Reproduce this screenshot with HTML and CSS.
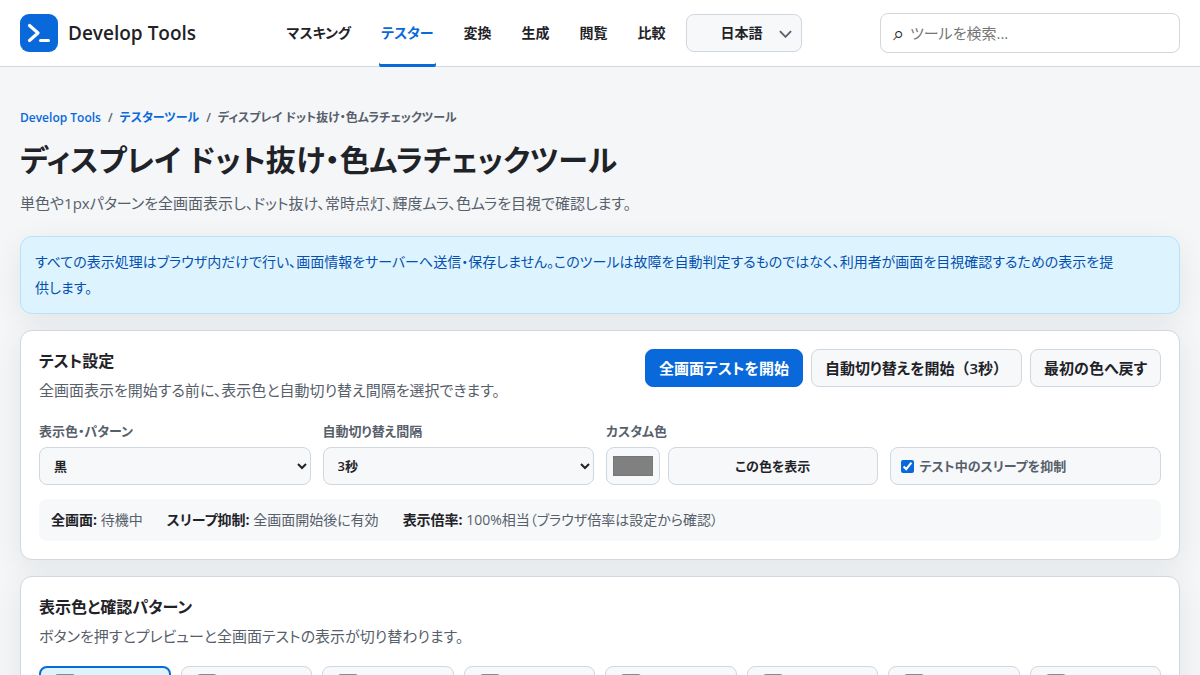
FILE: index.html
```html
<!DOCTYPE html>
<html lang="ja">
<head>
    <meta charset="UTF-8">
    <meta name="viewport" content="width=device-width, initial-scale=1">
    <title>ディスプレイ ドット抜け・色ムラチェックツール</title>
    <link rel="stylesheet" href="styles.css">
</head>
<body>
<header class="site-header">
    <a class="brand" href="#">
        <svg class="brand-logo" viewBox="0 0 38 38" aria-hidden="true">
            <rect width="38" height="38" rx="9" fill="#0969da"/>
            <path d="M9.500 11.500l8.500 7.500-8.500 7.500" fill="none" stroke="#fff" stroke-width="3.200" stroke-linecap="round" stroke-linejoin="round"/>
            <path d="M20.500 26.500h8" stroke="#fff" stroke-width="3" stroke-linecap="round"/>
        </svg>
        <span>Develop Tools</span>
    </a>
    <nav class="site-nav">
        <a href="#">マスキング</a>
        <a href="#" class="active">テスター</a>
        <a href="#">変換</a>
        <a href="#">生成</a>
        <a href="#">閲覧</a>
        <a href="#">比較</a>
        <div class="lang">
            <select class="lang-select" aria-label="言語">
                <option>日本語</option>
                <option>English</option>
            </select>
            <svg class="lang-arrow" viewBox="0 0 14 8" aria-hidden="true">
                <path d="M1 1l6 6 6-6" fill="none" stroke="#57606a" stroke-width="2"/>
            </svg>
        </div>
    </nav>
    <label class="search">
        <span class="search-icon">⌕</span>
        <input type="search" placeholder="ツールを検索..." aria-label="ツールを検索">
    </label>
</header>

<main class="page">
    <nav class="breadcrumb">
        <a href="#">Develop Tools</a>
        <span>/</span>
        <a href="#">テスターツール</a>
        <span>/</span>
        <span>ディスプレイ ドット抜け・色ムラチェックツール</span>
    </nav>
    <h1>ディスプレイ ドット抜け・色ムラチェックツール</h1>
    <p class="lead">単色や1pxパターンを全画面表示し、ドット抜け、常時点灯、輝度ムラ、色ムラを目視で確認します。</p>

    <div class="notice">すべての表示処理はブラウザ内だけで行い、画面情報をサーバーへ送信・保存しません。このツールは故障を自動判定するものではなく、利用者が画面を目視確認するための表示を提<br>供します。</div>

    <section class="card">
        <div class="card-head">
            <div>
                <h2>テスト設定</h2>
                <p>全画面表示を開始する前に、表示色と自動切り替え間隔を選択できます。</p>
            </div>
            <div class="actions">
                <button type="button" class="btn primary">全画面テストを開始</button>
                <button type="button" class="btn">自動切り替えを開始<span class="full-width">（3秒）</span></button>
                <button type="button" class="btn">最初の色へ戻す</button>
            </div>
        </div>
        <div class="settings">
            <div class="field">
                <label for="pattern">表示色・パターン</label>
                <select id="pattern" class="control">
                    <option>黒</option>
                    <option>白</option>
                    <option>赤</option>
                </select>
            </div>
            <div class="field">
                <label for="interval">自動切り替え間隔</label>
                <select id="interval" class="control">
                    <option>3秒</option>
                    <option>5秒</option>
                    <option>10秒</option>
                </select>
            </div>
            <div class="field">
                <label for="custom-color">カスタム色</label>
                <div class="color-row">
                    <input type="color" id="custom-color" class="color-input" value="#808080">
                    <button type="button" class="control">この色を表示</button>
                </div>
            </div>
            <label class="control check">
                <input type="checkbox" checked>
                <span>テスト中のスリープを抑制</span>
            </label>
        </div>
        <div class="status">
            <span><strong>全画面:</strong> 待機中</span>
            <span><strong>スリープ抑制:</strong> 全画面開始後に有効</span>
            <span><strong>表示倍率:</strong> 100%相当（ブラウザ倍率は設定から確認）</span>
        </div>
    </section>

    <section class="card">
        <h2>表示色と確認パターン</h2>
        <p>ボタンを押すとプレビューと全画面テストの表示が切り替わります。</p>
        <div class="patterns">
            <button type="button" class="pattern selected"><span class="swatch black"></span>黒</button>
            <button type="button" class="pattern"><span class="swatch white"></span>白</button>
            <button type="button" class="pattern"><span class="swatch red"></span>赤</button>
            <button type="button" class="pattern"><span class="swatch green"></span>緑</button>
            <button type="button" class="pattern"><span class="swatch blue"></span>青</button>
            <button type="button" class="pattern"><span class="swatch cyan"></span>シアン</button>
            <button type="button" class="pattern"><span class="swatch magenta"></span>マゼンタ</button>
            <button type="button" class="pattern"><span class="swatch yellow"></span>黄</button>
        </div>
    </section>
</main>
</body>
</html>
```
FILE: styles.css
```css
* {
    box-sizing: border-box;
}
body {
    margin: 0;
    background-color: #f4f6f8;
    color: #1f2328;
    font-family: "Open Sans", "Noto Sans CJK JP", sans-serif;
    font-size: 15px;
    line-height: 26px;
    font-feature-settings: "palt";
}
button, input, select {
    font: inherit;
    font-feature-settings: inherit;
    color: inherit;
}
a {
    color: #0969da;
    text-decoration: none;
}
h1, h2, p {
    margin: 0;
}
.full-width {
    font-feature-settings: normal;
}

/* header */
.site-header {
    display: grid;
    grid-template-columns: auto 1fr auto;
    align-items: center;
    height: 67px;
    padding: 0 20px;
    background-color: #fff;
    border-bottom: 1px solid #d0d7de;
}
.brand {
    display: flex;
    align-items: center;
    gap: 10px;
    color: #1f2328;
    font-size: 19px;
    font-weight: 600;
}
.brand-logo {
    width: 38px;
    height: 38px;
}
.site-nav {
    display: flex;
    align-items: center;
    justify-self: center;
    gap: 26px;
    padding-left: 10px;
}
.site-nav a {
    height: 67px;
    margin-bottom: -1px;
    padding: 0 2px;
    line-height: 66px;
    font-size: 14px;
    font-weight: 600;
    color: #1f2328;
    border-radius: 2px;
}
.site-nav a.active {
    color: #0969da;
    box-shadow: inset 0 -3px #0969da;
}
.lang {
    position: relative;
    margin-left: -8px;
}
.lang-select {
    display: block;
    appearance: none;
    width: 116px;
    height: 38px;
    padding: 0 38px 0 34px;
    font-size: 14px;
    font-weight: 600;
    background-color: #f6f8fa;
    border: 1px solid #d0d7de;
    border-radius: 8px;
}
.lang-arrow {
    position: absolute;
    top: 16px;
    right: 10px;
    width: 13px;
    height: 8px;
    pointer-events: none;
}
.search {
    display: flex;
    align-items: center;
    gap: 6px;
    width: 300px;
    height: 40px;
    padding: 0 12px;
    background-color: #fff;
    border: 1px solid #d0d7de;
    border-radius: 8px;
}
.search-icon {
    font-size: 20px;
}
.search input {
    flex: 1;
    min-width: 0;
    padding: 0;
    border: none;
    outline: none;
    background: none;
}
.search input::placeholder {
    color: #757575;
}

/* page */
.page {
    padding: 40px 20px;
}
.breadcrumb {
    display: flex;
    gap: 7px;
    line-height: 22px;
    font-size: 12px;
    font-weight: 600;
    color: #57606a;
}
h1 {
    margin-top: 8px;
    font-size: 30px;
    line-height: 46px;
    font-weight: 700;
}
.lead {
    margin-top: 7px;
    color: #57606a;
}
.notice {
    margin-top: 20px;
    padding: 12px 14px;
    font-size: 14px;
    color: #0550ae;
    background-color: #ddf4ff;
    border: 1px solid #b6e3f9;
    border-radius: 12px;
    box-shadow: 0 8px 30px rgba(31, 35, 40, 0.08);
}
.card {
    margin-top: 16px;
    padding: 18px;
    background-color: #fff;
    border: 1px solid #d0d7de;
    border-radius: 12px;
    box-shadow: 0 8px 30px rgba(31, 35, 40, 0.08);
}
.card h2 {
    font-size: 16px;
    line-height: 24px;
}
.card p {
    margin-top: 4px;
    color: #57606a;
}
.card-head {
    display: flex;
    justify-content: space-between;
    align-items: flex-start;
    gap: 16px;
}
.actions {
    display: flex;
    gap: 8px;
}
.btn {
    height: 38px;
    padding: 0 13px;
    font-weight: 600;
    white-space: nowrap;
    background-color: #f6f8fa;
    border: 1px solid #d0d7de;
    border-radius: 8px;
}
.btn.primary {
    color: #fff;
    background-color: #0969da;
    border-color: #0969da;
}
.settings {
    display: grid;
    grid-template-columns: repeat(4, 1fr);
    align-items: end;
    gap: 12px;
    margin-top: 18px;
}
.field {
    display: flex;
    flex-direction: column;
    gap: 6px;
}
.field label {
    line-height: 20px;
    font-size: 13px;
    font-weight: 600;
    color: #57606a;
}
.control {
    width: 100%;
    height: 38px;
    padding: 0 10px;
    font-size: 13px;
    font-weight: 600;
    background-color: #f6f8fa;
    border: 1px solid #d0d7de;
    border-radius: 8px;
}
.color-row {
    display: flex;
    gap: 8px;
}
.color-input {
    flex: none;
    width: 54px;
    height: 38px;
    padding: 4px;
    background-color: #f6f8fa;
    border: 1px solid #d0d7de;
    border-radius: 8px;
}
.check {
    display: flex;
    align-items: center;
    gap: 6px;
    color: #57606a;
}
.check input {
    width: 13px;
    height: 13px;
    margin: 0;
    accent-color: #0969da;
}
.status {
    display: flex;
    flex-wrap: wrap;
    gap: 24px;
    margin-top: 14px;
    padding: 10px 12px;
    line-height: 22px;
    font-size: 14px;
    color: #57606a;
    background-color: #f6f8fa;
    border-radius: 8px;
}
.status strong {
    color: #1f2328;
}
.patterns {
    display: grid;
    grid-template-columns: repeat(8, 1fr);
    gap: 10px;
    margin-top: 17px;
}
.pattern {
    display: flex;
    align-items: center;
    gap: 8px;
    height: 38px;
    padding: 0 14px;
    font-size: 13px;
    font-weight: 600;
    background-color: #f6f8fa;
    border: 1px solid #d0d7de;
    border-radius: 8px;
}
.pattern.selected {
    padding: 0 13px;
    background-color: #ddf4ff;
    border: 2px solid #0969da;
}
.swatch {
    width: 22px;
    height: 22px;
    border: 1px solid #818b98;
    border-radius: 4px;
}
.black { background-color: #000; }
.white { background-color: #fff; }
.red { background-color: #f00; }
.green { background-color: #0f0; }
.blue { background-color: #00f; }
.cyan { background-color: #0ff; }
.magenta { background-color: #f0f; }
.yellow { background-color: #ff0; }
```
